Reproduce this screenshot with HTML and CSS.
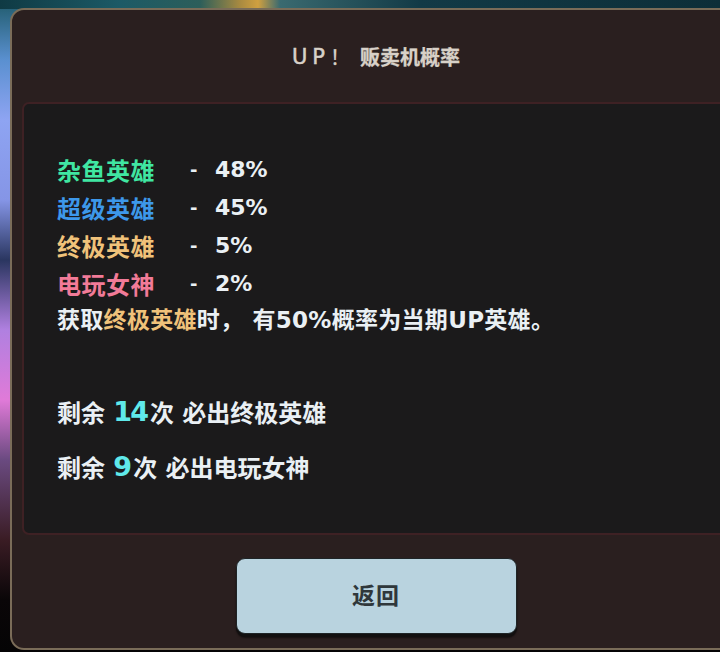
FILE: index.html
```html
<!DOCTYPE html>
<html lang="zh-CN">
<head>
<meta charset="utf-8">
<title>UP！贩卖机概率</title>
<link rel="stylesheet" href="styles.css">
</head>
<body>
<div class="backdrop">
  <section class="dialog">
    <h1 class="dialog-title"><span class="title-latin">UP</span><span class="title-bang">！</span>贩卖机概率</h1>
    <div class="dialog-body">
      <ul class="rates">
        <li class="rate"><span class="rate-name tier-common">杂鱼英雄</span><span class="rate-dash">-</span><span class="rate-value">48%</span></li>
        <li class="rate"><span class="rate-name tier-super">超级英雄</span><span class="rate-dash">-</span><span class="rate-value">45%</span></li>
        <li class="rate"><span class="rate-name tier-ultimate">终极英雄</span><span class="rate-dash">-</span><span class="rate-value">5%</span></li>
        <li class="rate"><span class="rate-name tier-goddess">电玩女神</span><span class="rate-dash">-</span><span class="rate-value">2%</span></li>
      </ul>
      <p class="note">获取<span class="tier-ultimate">终极英雄</span>时，<span class="gap"></span>有50%概率为当期UP英雄。</p>
      <div class="pity">
        <p class="pity-line">剩余 <span class="pity-count">14</span>次 必出终极英雄</p>
        <p class="pity-line">剩余 <span class="pity-count">9</span>次 必出电玩女神</p>
      </div>
    </div>
    <div class="dialog-actions">
      <button class="btn-back" type="button">返回</button>
    </div>
  </section>
</div>
</body>
</html>
```
FILE: styles.css
```css
html, body {
  margin: 0;
  padding: 0;
  width: 720px;
  height: 652px;
  overflow: hidden;
}

body {
  font-family: "DejaVu Sans", "Noto Sans CJK SC", sans-serif;
  background: linear-gradient(180deg, #1f5a6a 0px, #5a90d0 60px, #8ea4f2 120px, #8595e6 200px, #2a3660 260px, #b080e0 330px, #e07ad8 400px, #6a4a80 460px, #3a1c24 540px, #0a0608 600px, #050405 652px);
}

.backdrop {
  width: 720px;
  height: 652px;
  padding: 8px 0 0 10px;
  box-sizing: border-box;
  background:
    linear-gradient(90deg, #0f3a44 0, #1c5a66 120px, #2c5e5a 200px, #a88a40 240px, #d0a040 258px, #3a6a70 280px, #123a46 420px, #0d2e38 720px) top left / 100% 9px no-repeat;
}

/* outer dialog frame */
.dialog {
  width: 732px;
  height: 642px;
  box-sizing: border-box;
  border: 2px solid #7a6c58;
  border-radius: 14px;
  background: #2a1f1f;
  display: flex;
  flex-direction: column;
  padding: 0 10px;
}

.dialog-title {
  margin: 0;
  height: 92px;
  display: flex;
  align-items: center;
  justify-content: center;
  font-family: "Noto Sans CJK SC", sans-serif;
  font-size: 20px;
  font-weight: 700;
  color: #d8d1c8;
  padding-top: 1px;
  box-sizing: border-box;
  -webkit-text-stroke: 0.3px #d8d1c8;
}

.title-latin {
  font-family: "DejaVu Sans", sans-serif;
  font-size: 21px;
  letter-spacing: 5px;
  font-weight: 400;
  -webkit-text-stroke: 0.5px #d8d1c8;
}

.title-bang {
  font-weight: 400;
  margin-right: 10px;
}

/* inner content panel */
.dialog-body {
  height: 433px;
  box-sizing: border-box;
  border: 2px solid #3e2124;
  border-radius: 7px;
  background: #1b1a1b;
  padding: 46px 0 0 33px;
  color: #eaf0f4;
  font-weight: 700;
  font-size: 23px;
}

.rates {
  list-style: none;
  margin: 0;
  padding: 0;
}

.rate {
  display: flex;
  align-items: center;
  height: 38px;
}

.rate-name {
  width: 133px;
  font-size: 24px;
  letter-spacing: 0.5px;
}

.rate-dash {
  width: 25px;
  font-size: 18px;
}

.rate-value {
  font-size: 22px;
}

.tier-common { color: #40e6a2; }
.tier-super { color: #3d98ea; }
.tier-ultimate { color: #f0c27a; }
.tier-goddess { color: #f27b98; }

.note {
  margin: 0;
  height: 37px;
  line-height: 37px;
  font-size: 23px;
  white-space: nowrap;
  letter-spacing: 0.3px;
}

.gap {
  display: inline-block;
  width: 9px;
}

.pity {
  margin-top: 45px;
  display: flex;
  flex-direction: column;
}

.pity-line {
  margin: 0;
  height: 55px;
  display: flex;
  align-items: center;
  font-size: 24px;
  white-space: pre;
}

.pity-count {
  color: #5fe9ea;
  font-size: 27px;
  letter-spacing: -2px;
  margin-right: 3px;
}

.dialog-actions {
  display: flex;
  justify-content: center;
  padding-top: 23px;
}

.btn-back {
  width: 281px;
  height: 76px;
  border: 1px solid #1e2426;
  border-radius: 9px;
  background: #b9d3df;
  box-shadow: 0 3px 0 #121010, 0 4px 2px rgba(0,0,0,0.5);
  font-family: "Noto Sans CJK SC", sans-serif;
  font-size: 23px;
  font-weight: 700;
  color: #2f373b;
  letter-spacing: 1px;
  padding: 0 0 4px 0;
}
```
